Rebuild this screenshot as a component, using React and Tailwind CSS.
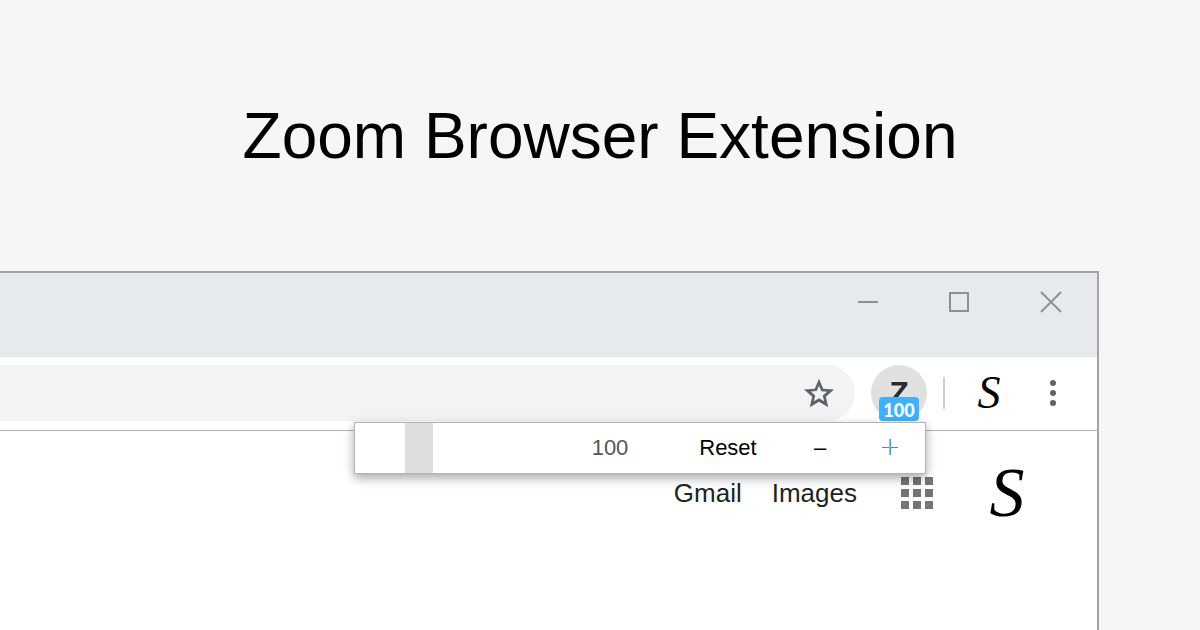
import { useState } from 'react';

const WindowButton = ({ label, children }) => (
  <button aria-label={label} className="flex h-[58px] w-[92px] items-center justify-center text-[#8e9092]">
    <svg width="22" height="22" viewBox="0 0 22 22" fill="none" stroke="currentColor" strokeWidth="2">
      {children}
    </svg>
  </button>
);

const TitleBar = () => (
  <div className="flex h-[84px] items-start justify-end bg-[#e6eaed]">
    <WindowButton label="Minimize">
      <path d="M2 11h20" />
    </WindowButton>
    <WindowButton label="Maximize">
      <rect x="2" y="2" width="18" height="18" />
    </WindowButton>
    <WindowButton label="Close">
      <path d="M1 1l20 20M21 1L1 21" />
    </WindowButton>
  </div>
);

const ZoomPopup = ({ zoom, setZoom }) => (
  <div className="absolute top-[65px] right-[171px] flex h-[52px] w-[572px] items-start border border-[#b4b4b4] bg-white text-[22px] leading-[50px] text-black shadow-[0_4px_10px_rgba(0,0,0,0.35)]">
    <input
      id="zoom-level"
      type="range"
      aria-label="Zoom level"
      min="25"
      max="275"
      value={zoom}
      onChange={(e) => setZoom(Number(e.target.value))}
      className="h-full min-w-0 flex-1 appearance-none bg-transparent [&::-webkit-slider-runnable-track]:h-[50px] [&::-webkit-slider-thumb]:h-[50px] [&::-webkit-slider-thumb]:w-7 [&::-webkit-slider-thumb]:appearance-none [&::-webkit-slider-thumb]:bg-[#dddddd]"
    />
    <output htmlFor="zoom-level" className="w-[122px] text-center text-[#555555]">{zoom}</output>
    <button onClick={() => setZoom(100)} className="w-[114px]">Reset</button>
    <button aria-label="Zoom out" onClick={() => setZoom(Math.max(25, zoom - 5))} className="w-[70px]">–</button>
    <button
      aria-label="Zoom in"
      onClick={() => setZoom(Math.min(275, zoom + 5))}
      className="flex h-12 w-[70px] items-center justify-center"
    >
      <svg width="16" height="16" viewBox="0 0 16 16">
        <path d="M0 8.5h16" stroke="#7c7c7c" />
        <path d="M7.5 0v16" stroke="#e0ad70" />
        <path d="M8.5 0v16" stroke="#4a9fe0" />
      </svg>
    </button>
  </div>
);

const Toolbar = () => {
  const [zoom, setZoom] = useState(100);

  return (
    <div className="relative flex gap-4 border-b border-[#b0b0b0] bg-white pt-2 pr-4 pb-[9px]">
      {/* Address bar */}
      <div className="flex h-14 flex-1 rounded-r-full bg-[#f1f3f4] pr-2">
        <input type="text" aria-label="Address" className="min-w-0 flex-1 bg-transparent px-4 text-[26px] outline-none" />
        <button aria-label="Bookmark" className="flex w-14 items-center justify-center text-[#5f6368]">
          <svg width="36" height="36" viewBox="0 0 24 24" fill="currentColor">
            <path d="M22 9.74l-7.19-.62L12 2.5 9.19 9.13 2 9.74l5.46 4.73L5.82 21.5 12 17.77l6.18 3.73-1.63-7.03L22 9.74zM12 15.5l-3.4 2.05.9-3.87-3-2.6 3.96-.34L12 7.1l1.55 3.65 3.96.34-3 2.6.9 3.87L12 15.5z" />
          </svg>
        </button>
      </div>

      {/* Extension icon with its badge */}
      <button className="relative h-14 w-14 rounded-full bg-[#e0e0e0]">
        <span className="block text-[32px] leading-[56px] font-bold text-[#2b2b2b] [text-shadow:0_0_2px_white]">Z</span>
        <span className="absolute bottom-0 left-2 h-6 w-10 rounded-sm bg-[#3fb2ff] font-[Lato,sans-serif] text-[18px] leading-[26px] font-black text-white">
          {zoom}
        </span>
      </button>
      <div className="my-3 w-0.5 bg-[#cfcfcf]"></div>

      <div className="flex gap-2">
        <button className="h-14 w-14 font-['Liberation_Serif',serif] text-[46px] leading-[56px] text-black italic">S</button>
        <button aria-label="Menu" className="flex h-14 w-14 flex-col items-center justify-center gap-1">
          <span className="h-1.5 w-1.5 rounded-full bg-[#5f6368]"></span>
          <span className="h-1.5 w-1.5 rounded-full bg-[#5f6368]"></span>
          <span className="h-1.5 w-1.5 rounded-full bg-[#5f6368]"></span>
        </button>
      </div>

      <ZoomPopup zoom={zoom} setZoom={setZoom} />
    </div>
  );
};

const PageHeader = () => (
  <nav className="flex items-center justify-end pt-[30px] pr-[58px] text-[26px] text-[#222222]">
    <a href="#gmail" className="mr-[30px]">Gmail</a>
    <a href="#images" className="mr-11">Images</a>
    <button aria-label="Apps" className="mr-[42px] grid grid-cols-3 gap-1">
      {Array.from({ length: 9 }, (_, i) => (
        <span key={i} className="h-2 w-2 bg-[#757575]"></span>
      ))}
    </button>
    <button className="h-16 w-16 font-['Liberation_Serif',serif] text-[70px] leading-[64px] text-black italic">S</button>
  </nav>
);

const App = () => {
  return (
    <div className="flex min-h-screen flex-col bg-[#f6f6f6] font-['Liberation_Sans',Arial,sans-serif]">
      <h1 className="pt-[101px] pb-[99px] text-center text-[64px] leading-[71px] text-black">Zoom Browser Extension</h1>
      <div className="mr-[101px] flex-1 border-t-2 border-r-2 border-[#a3a3a3] bg-white">
        <TitleBar />
        <Toolbar />
        <PageHeader />
      </div>
    </div>
  );
};

export default App;
